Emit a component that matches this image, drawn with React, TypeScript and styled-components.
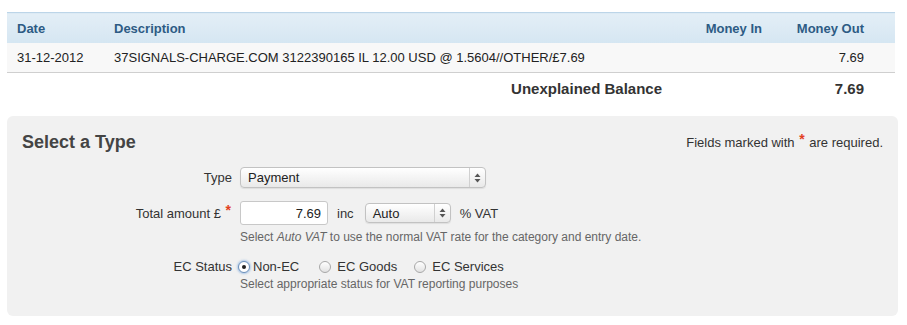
import React from 'react';
import styled, { createGlobalStyle } from 'styled-components';

const GlobalStyle = createGlobalStyle`
  body {
    margin: 0;
    background: #fff;
    font-family: "Liberation Sans", Arial, Helvetica, sans-serif;
    font-size: 13px;
    color: #222;
  }
`;

// Styles
const Page = styled.div`
  width: 891px;
  padding: 12px 0 0 7px;
`;

const Table = styled.table`
  width: 888px;
  border-collapse: collapse;
  table-layout: fixed;
`;

const HeadCell = styled.th<{ $right?: boolean }>`
  height: 30px;
  padding: 0 ${(p) => (p.$right ? '31px' : '0')} 0 ${(p) => (p.$right ? '0' : '10px')};
  text-align: ${(p) => (p.$right ? 'right' : 'left')};
  font-size: 13px;
  font-weight: bold;
  color: #2d5b84;
  background: linear-gradient(#e3eef6, #d5e6f2);
  border-top: 1px solid #bcd5e8;
`;

const Cell = styled.td<{ $right?: boolean }>`
  height: 29px;
  padding: 0 ${(p) => (p.$right ? '31px' : '0')} 0 ${(p) => (p.$right ? '0' : '10px')};
  text-align: ${(p) => (p.$right ? 'right' : 'left')};
  background: #f8f8f8;
  border-bottom: 1px solid #cfcfcf;
  color: #222;
  white-space: nowrap;
`;

const TotalCell = styled.td<{ $pad: number }>`
  height: 31px;
  padding: 0 ${(p) => p.$pad}px 0 0;
  text-align: right;
  font-size: 15px;
  font-weight: bold;
  color: #333;
`;

const Panel = styled.div`
  margin-top: 12px;
  width: 891px;
  height: 200px;
  box-sizing: border-box;
  background: #f1f1f1;
  border-radius: 6px;
  padding: 14px 15px 0 15px;
`;

const PanelHead = styled.div`
  display: flex;
  justify-content: space-between;
  align-items: center;
  height: 24px;
`;

const Title = styled.h2`
  margin: 0;
  font-size: 18px;
  font-weight: bold;
  color: #444;
`;

const Note = styled.div`
  font-size: 13px;
  color: #333;
`;

const Star = styled.span`
  color: #e2401f;
  font-weight: bold;
  font-size: 14px;
  position: relative;
  top: -3px;
  margin: 0 1px;
`;

const Form = styled.div`
  display: grid;
  grid-template-columns: 210px auto;
  column-gap: 8px;
  margin-top: 13px;
  align-items: center;
`;

const Label = styled.div`
  text-align: right;
  color: #333;
  font-size: 13px;
`;

const Field = styled.div<{ $gap?: number }>`
  display: flex;
  align-items: center;
  gap: ${(p) => p.$gap ?? 8}px;
  color: #333;
`;

const Spacer = styled.div<{ $h: number }>`
  height: ${(p) => p.$h}px;
  grid-column: 1 / span 2;
`;

const Select = styled.div<{ $w: number; $h?: number }>`
  width: ${(p) => p.$w}px;
  height: ${(p) => p.$h ?? 20}px;
  box-sizing: border-box;
  display: flex;
  align-items: center;
  border: 1px solid #c2c2c2;
  border-radius: 4px;
  background: linear-gradient(#ffffff, #e9e9e9);
  box-shadow: 0 1px 1px rgba(0, 0, 0, 0.08);
  font-size: 13px;
  color: #222;
`;

const SelectText = styled.span`
  flex: 1;
  padding-left: 7px;
`;

const Arrows = styled.span`
  width: 15px;
  height: 100%;
  border-left: 1px solid #d0d0d0;
  display: flex;
  align-items: center;
  justify-content: center;
`;

const Input = styled.input`
  width: 88px;
  height: 24px;
  box-sizing: border-box;
  border: 1px solid #c8c8c8;
  border-radius: 3px;
  background: #fff;
  text-align: right;
  padding: 0 6px;
  font-family: "Liberation Sans", Arial, Helvetica, sans-serif;
  font-size: 13px;
  color: #222;
  outline: none;
`;

const Word = styled.span<{ $after?: number }>`
  margin-right: ${(p) => p.$after ?? 0}px;
`;

const Help = styled.div<{ $top: number }>`
  grid-column: 2;
  margin-top: ${(p) => p.$top}px;
  font-size: 12px;
  color: #666;
`;

const RadioLabel = styled.label<{ $gap: number; $after: number }>`
  display: flex;
  align-items: center;
  gap: ${(p) => p.$gap}px;
  margin-right: ${(p) => p.$after}px;
  font-size: 13px;
  color: #333;
`;

const Radio = styled.span<{ $on?: boolean }>`
  width: 12px;
  height: 12px;
  box-sizing: border-box;
  border-radius: 50%;
  border: 1px solid ${(p) => (p.$on ? '#6c8fb9' : '#a8a8a8')};
  background: ${(p) => (p.$on ? '#fff' : 'linear-gradient(#ffffff, #e2e2e2)')};
  box-shadow: ${(p) => (p.$on ? '0 0 2px 1px rgba(90,150,220,0.45)' : 'none')};
  display: flex;
  align-items: center;
  justify-content: center;
  &::after {
    content: '';
    display: ${(p) => (p.$on ? 'block' : 'none')};
    width: 4px;
    height: 4px;
    border-radius: 50%;
    background: #222;
  }
`;

const RadioGroup = styled.div`
  display: flex;
  align-items: center;
  margin-left: -2px;
`;

const ArrowIcon: React.FC = () => (
  <svg width="7" height="10" viewBox="0 0 7 10">
    <path d="M3.5 0.5 L6.5 4 L0.5 4 Z" fill="#555" />
    <path d="M3.5 9.5 L6.5 6 L0.5 6 Z" fill="#555" />
  </svg>
);

const App: React.FC = () => {
  return (
    <Page>
      <GlobalStyle />
      <Table>
        <colgroup>
          <col style={{ width: 97 }} />
          <col />
          <col style={{ width: 120 }} />
          <col style={{ width: 102 }} />
        </colgroup>
        <thead>
          <tr>
            <HeadCell>Date</HeadCell>
            <HeadCell>Description</HeadCell>
            <HeadCell $right>Money In</HeadCell>
            <HeadCell $right>Money Out</HeadCell>
          </tr>
        </thead>
        <tbody>
          <tr>
            <Cell>31-12-2012</Cell>
            <Cell>37SIGNALS-CHARGE.COM 3122390165 IL 12.00 USD @ 1.5604//OTHER/£7.69</Cell>
            <Cell $right></Cell>
            <Cell $right>7.69</Cell>
          </tr>
          <tr>
            <TotalCell colSpan={3} $pad={131}>
              Unexplained Balance
            </TotalCell>
            <TotalCell $pad={31}>7.69</TotalCell>
          </tr>
        </tbody>
      </Table>

      <Panel>
        <PanelHead>
          <Title>Select a Type</Title>
          <Note>
            Fields marked with <Star>*</Star> are required.
          </Note>
        </PanelHead>

        <Form>
          <Label>Type</Label>
          <Field>
            <Select $w={246} $h={21}>
              <SelectText>Payment</SelectText>
              <Arrows>
                <ArrowIcon />
              </Arrows>
            </Select>
          </Field>

          <Spacer $h={13} />

          <Label>
            Total amount £ <Star>*</Star>
          </Label>
          <Field $gap={9}>
            <Input defaultValue="7.69" readOnly />
            <Word $after={2}>inc</Word>
            <Select $w={86}>
              <SelectText>Auto</SelectText>
              <Arrows>
                <ArrowIcon />
              </Arrows>
            </Select>
            <Word>% VAT</Word>
          </Field>
          <Help $top={5}>
            Select <i>Auto VAT</i> to use the normal VAT rate for the category and entry date.
          </Help>

          <Spacer $h={15} />

          <Label>EC Status</Label>
          <RadioGroup>
            <RadioLabel $gap={3} $after={20}>
              <Radio $on />
              Non-EC
            </RadioLabel>
            <RadioLabel $gap={6} $after={17}>
              <Radio />
              EC Goods
            </RadioLabel>
            <RadioLabel $gap={6} $after={0}>
              <Radio />
              EC Services
            </RadioLabel>
          </RadioGroup>
          <Help $top={3}>Select appropriate status for VAT reporting purposes</Help>
        </Form>
      </Panel>
    </Page>
  );
};

export default App;
